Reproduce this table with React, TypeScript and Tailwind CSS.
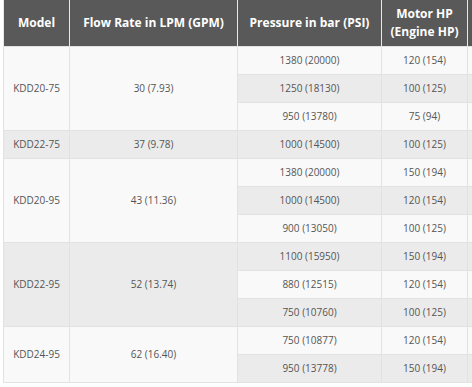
import React from 'react';

type Row = { model?: string; span?: number; flow?: string; pressure: string; hp: string };

const rows: Row[] = [
  { model: 'KDD20-75', span: 3, flow: '30 (7.93)', pressure: '1380 (20000)', hp: '120 (154)' },
  { pressure: '1250 (18130)', hp: '100 (125)' },
  { pressure: '950 (13780)', hp: '75 (94)' },
  { model: 'KDD22-75', span: 1, flow: '37 (9.78)', pressure: '1000 (14500)', hp: '100 (125)' },
  { model: 'KDD20-95', span: 3, flow: '43 (11.36)', pressure: '1380 (20000)', hp: '150 (194)' },
  { pressure: '1000 (14500)', hp: '120 (154)' },
  { pressure: '900 (13050)', hp: '100 (125)' },
  { model: 'KDD22-95', span: 3, flow: '52 (13.74)', pressure: '1100 (15950)', hp: '150 (194)' },
  { pressure: '880 (12515)', hp: '120 (154)' },
  { pressure: '750 (10760)', hp: '100 (125)' },
  { model: 'KDD24-95', span: 2, flow: '62 (16.40)', pressure: '750 (10877)', hp: '120 (154)' },
  { pressure: '950 (13778)', hp: '150 (194)' },
];

const cell = 'border border-[#e2e2e2] text-center align-middle p-0';

export default function App() {
  return (
    <div className="w-[472px] h-[387px] overflow-hidden bg-white font-['Open_Sans',sans-serif]">
      <table className="table-fixed border-collapse ml-[3px] w-[566px] text-[10px] text-[#555]">
        <colgroup>
          <col className="w-[66px]" />
          <col className="w-[168px]" />
          <col className="w-[144px]" />
          <col className="w-[86px]" />
          <col className="w-[102px]" />
        </colgroup>
        <thead>
          <tr className="h-[46px] bg-[#595959] text-white text-[12px] font-bold leading-[18px]">
            <th className="border-x border-[#e8e8e8] px-1">Model</th>
            <th className="border-x border-[#e8e8e8] px-1">Flow Rate in LPM (GPM)</th>
            <th className="border-x border-[#e8e8e8] px-1">Pressure in bar (PSI)</th>
            <th className="border-x border-[#e8e8e8] px-1">Motor HP (Engine HP)</th>
            <th className="border-x border-[#e8e8e8] px-1"></th>
          </tr>
        </thead>
        <tbody>
          {rows.map((r, i) => (
            <tr key={i} className={`h-[28px] ${i % 2 === 1 ? 'bg-[#ebebeb]' : 'bg-[#f9f9f9]'}`}>
              {r.model && (
                <td rowSpan={r.span} className={cell}>{r.model}</td>
              )}
              {r.flow && (
                <td rowSpan={r.span} className={cell}>{r.flow}</td>
              )}
              <td className={cell}>{r.pressure}</td>
              <td className={cell}>{r.hp}</td>
              <td className={cell}></td>
            </tr>
          ))}
        </tbody>
      </table>
    </div>
  );
}
